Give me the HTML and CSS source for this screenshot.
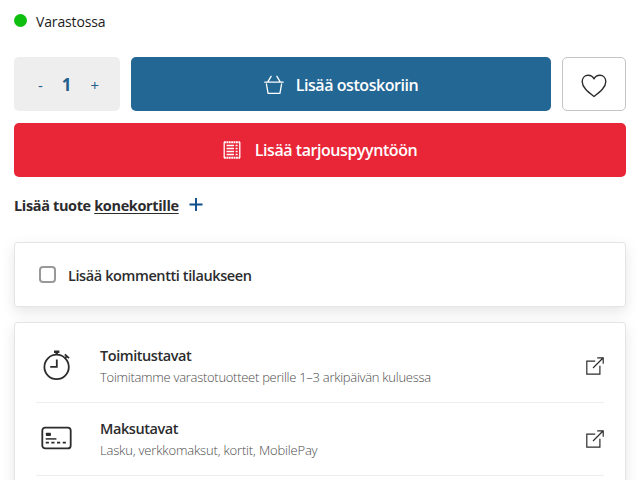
FILE: index.html
```html
<!DOCTYPE html>
<html lang="fi">
  <head>
    <meta charset="UTF-8" />
    <meta name="viewport" content="width=device-width, initial-scale=1.0" />
    <title>Tuote</title>
    <link rel="stylesheet" href="styles.css">
  </head>
  <body>
    <div class="product">
      <div class="stock"><span class="dot"></span><span>Varastossa</span></div>

      <div class="buy">
        <div class="qty">
          <button class="step">-</button>
          <span class="amount">1</span>
          <button class="step">+</button>
        </div>
        <button class="btn cart">
          <svg width="20" height="20" viewBox="0 0 20 20" fill="none" stroke="currentColor" stroke-width="1.3" stroke-linejoin="round" stroke-linecap="round">
            <path d="M.8 7.2h18.4M2.4 9l1.7 9.4h11.800l1.7-9.400M3.800 6.800L7.100 1.300M16.200 6.800l-3.300-5.500" />
          </svg>
          <span>Lisää ostoskoriin</span>
        </button>
        <button class="btn wish" aria-label="Suosikki">
          <svg width="28" height="26" viewBox="0 0 28 26" fill="none" stroke="currentColor" stroke-width="1.4" stroke-linejoin="round">
            <path d="M14 5.8C12.6 3.2 10.6 2.3 8.2 2.3 4.6 2.3 2.2 5 2.2 8.7c0 5.5 5.3 9.8 11.8 14.8 6.5-5 11.8-9.3 11.8-14.8 0-3.7-2.4-6.4-6-6.4-2.4 0-4.4.9-5.800 3.500z" />
          </svg>
        </button>
      </div>

      <button class="btn quote">
        <svg width="18" height="18" viewBox="0 0 18 18" fill="none" stroke="currentColor" stroke-width="1.3">
          <path d="M1.2 1v16M16.8 1v16" />
          <path d="M1 1.2h16M1 16.8h16" stroke-width="1.9" stroke-dasharray="1.9 .5" />
          <path d="M3.500 4.500h7.500M3.500 7.500h7.500M3.500 10.500h7.500M3.500 13.500h7.500M12.600 4.500h2M12.600 7.500h2M12.600 10.500h2M12.600 13.500h2" />
        </svg>
        <span>Lisää tarjouspyyntöön</span>
      </button>

      <div class="machine">
        <span>Lisää tuote <a href="#">konekortille</a></span>
        <svg width="14" height="14" viewBox="0 0 14 14" stroke="#0d4c8c" stroke-width="1.9">
          <path d="M7 0v13M.5 6.500h13" />
        </svg>
      </div>

      <label class="card comment">
        <input type="checkbox">
        <span>Lisää kommentti tilaukseen</span>
      </label>

      <div class="card info">
        <div class="row">
          <svg class="icon" width="32" height="32" viewBox="0 0 32 32" fill="none" stroke="currentColor" stroke-width="1.8">
            <circle cx="15.6" cy="16.9" r="12.2" />
            <path d="M15.8 9.6v7.300H9.200" />
            <path d="M13 1.8h5.4M15.700 2v3" stroke-width="2.4" />
            <path d="M23.8 4.4l4.200 3.700M24 8.100l2-2" stroke-width="1.9" />
          </svg>
          <div class="text">
            <div class="title">Toimitustavat</div>
            <div class="desc desc-delivery">Toimitamme varastotuotteet perille 1–3 arkipäivän kuluessa</div>
          </div>
          <svg width="18" height="18" viewBox="0 0 18 18" fill="none" stroke="currentColor" stroke-width="1.2">
            <path d="M9.200 4.100H.8v13.100h13.100V8.800M7 11L17 1M11.200.8h6v6" />
          </svg>
        </div>
        <div class="row">
          <svg class="icon" width="32" height="32" viewBox="0 0 32 32" fill="none" stroke="currentColor" stroke-width="1.8">
            <rect x="1.3" y="4.6" width="28.4" height="20.8" rx="3" />
            <rect x="4.9" y="9.7" width="5" height="3.2" rx=".6" fill="currentColor" stroke="none" />
            <path d="M4.7 15.9h10.700" stroke-width="1.5" />
            <path d="M4.7 19.7h3.200M10.300 19.700h3.200M16 19.700h3.200M21.700 19.700h3.200" />
          </svg>
          <div class="text">
            <div class="title">Maksutavat</div>
            <div class="desc desc-payment">Lasku, verkkomaksut, kortit, MobilePay</div>
          </div>
          <svg width="18" height="18" viewBox="0 0 18 18" fill="none" stroke="currentColor" stroke-width="1.2">
            <path d="M9.200 4.100H.8v13.100h13.100V8.800M7 11L17 1M11.200.8h6v6" />
          </svg>
        </div>
      </div>
    </div>
  </body>
</html>
```
FILE: styles.css
```css
* {
  box-sizing: border-box;
}
body {
  margin: 0;
  height: 480px;
  overflow: hidden;
  background: #fff;
  color: #2c2c2e;
  font-family: "Open Sans", "Noto Sans", sans-serif;
}
button {
  margin: 0;
  padding: 0;
  border: 0;
  font-family: inherit;
}
svg {
  display: block;
  flex: none;
}
span {
  white-space: nowrap;
}
.product {
  height: 480px;
  overflow: hidden;
  padding: 11px 14px 0;
}
.stock {
  display: flex;
  align-items: center;
  height: 20px;
  font-size: 14px;
  letter-spacing: -0.15px;
  color: #1c1c1c;
}
.dot {
  width: 13px;
  height: 13px;
  margin: -1px 9px 0 0;
  border-radius: 50%;
  background: #0fbf0f;
}
.buy {
  display: flex;
  gap: 11px;
  height: 54px;
  margin-top: 26px;
}
.qty {
  display: flex;
  align-items: center;
  justify-content: center;
  gap: 19px;
  width: 106px;
  padding-left: 3px;
  border-radius: 5px;
  background: #eee;
  color: #1f5f8b;
}
.step {
  padding-top: 1px;
  background: none;
  color: inherit;
  font-size: 15px;
}
.amount {
  font-size: 17px;
  font-weight: 700;
}
.btn {
  display: flex;
  align-items: center;
  justify-content: center;
  padding-top: 2px;
  border-radius: 5px;
  color: #fff;
  font-size: 16px;
  font-weight: 600;
  letter-spacing: -0.44px;
}
.cart {
  flex: 1;
  gap: 12px;
  background: #236795;
}
.wish {
  width: 64px;
  padding-top: 4px;
  border: 1px solid #c4c4c4;
  background: #fff;
  color: #2c2c2e;
}
.quote {
  gap: 14px;
  width: 612px;
  height: 54px;
  margin-top: 12px;
  padding-top: 0;
  background: #e92637;
}
.machine {
  display: flex;
  align-items: center;
  gap: 10px;
  height: 20px;
  margin-top: 18px;
  font-size: 14.5px;
  font-weight: 700;
  letter-spacing: -0.36px;
}
.machine a {
  color: inherit;
  text-underline-offset: 2px;
}
.card {
  border: 1px solid #e4e4e4;
  border-radius: 3px;
  background: #fff;
  box-shadow: 0 5px 14px rgba(0, 0, 0, 0.1);
}
.comment {
  display: flex;
  align-items: center;
  height: 65px;
  margin-top: 27px;
  padding-left: 24px;
  font-size: 14.5px;
  font-weight: 600;
  letter-spacing: -0.4px;
}
.comment input {
  appearance: none;
  width: 17px;
  height: 17px;
  margin: 0 12px 0 0;
  border: 2px solid #999;
  border-radius: 4px;
}
.comment span {
  padding-top: 2px;
}
.info {
  height: 170px;
  margin-top: 15px;
  padding: 7px 21px 0;
}
.row {
  display: flex;
  align-items: center;
  height: 73px;
  border-bottom: 1px solid #eee;
}
.text {
  flex: 1;
  margin-left: 27px;
  white-space: nowrap;
}
.title {
  height: 22px;
  font-size: 14.5px;
  font-weight: 600;
  line-height: 24px;
  letter-spacing: -0.44px;
}
.desc {
  color: #4c4c4c;
  font-size: 13px;
  font-weight: 300;
  line-height: 22px;
}
.desc-delivery {
  letter-spacing: -0.28px;
}
.desc-payment {
  letter-spacing: -0.17px;
}
.icon {
  margin-left: 5px;
}
```
